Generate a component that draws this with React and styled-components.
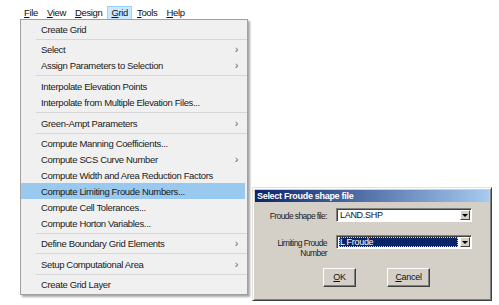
import React from "react";
import styled, { createGlobalStyle } from "styled-components";

const GlobalStyle = createGlobalStyle`
  html, body {
    margin: 0;
    padding: 0;
    background: #ffffff;
  }
  body {
    font-family: "Liberation Sans", Arial, sans-serif;
  }
`;

const menuBar = [
  { key: "F", rest: "ile" },
  { key: "V", rest: "iew" },
  { key: "D", rest: "esign" },
  { key: "G", rest: "rid", open: true },
  { key: "T", rest: "ools" },
  { key: "H", rest: "elp" },
];

const items = [
  { label: "Create Grid" },
  { sep: 4 },
  { label: "Select", sub: true },
  { label: "Assign Parameters to Selection", sub: true },
  { sep: 5 },
  { label: "Interpolate Elevation Points" },
  { label: "Interpolate from Multiple Elevation Files..." },
  { sep: 5 },
  { label: "Green-Ampt Parameters", sub: true },
  { sep: 4 },
  { label: "Compute Manning Coefficients..." },
  { label: "Compute SCS Curve Number", sub: true },
  { label: "Compute Width and Area Reduction Factors" },
  { label: "Compute Limiting Froude Numbers...", active: true },
  { label: "Compute Cell Tolerances..." },
  { label: "Compute Horton Variables..." },
  { sep: 4 },
  { label: "Define Boundary Grid Elements", sub: true },
  { sep: 5 },
  { label: "Setup Computational Area", sub: true },
  { sep: 4 },
  { label: "Create Grid Layer" },
];

function App() {
  return (
    <Page>
      <GlobalStyle />
      <MenuBar>
        {menuBar.map((m) => (
          <BarItem key={m.key} open={m.open}>
            <u>{m.key}</u>
            {m.rest}
          </BarItem>
        ))}
      </MenuBar>
      <Stage>
        <Dropdown>
          {items.map((it, i) =>
            it.sep ? (
              <Separator key={i} h={it.sep} />
            ) : (
              <MenuItem key={i} active={it.active}>
                <span>{it.label}</span>
                {it.sub && <Chevron>&#x203A;</Chevron>}
              </MenuItem>
            )
          )}
        </Dropdown>
        <Dialog>
          <TitleBar>Select Froude shape file</TitleBar>
          <DialogBody>
            <FieldRow>
              <FieldLabel>Froude shape file:</FieldLabel>
              <Combo>
                <ComboText>LAND.SHP</ComboText>
                <ComboButton />
              </Combo>
            </FieldRow>
            <FieldRow>
              <FieldLabel>
                Limiting Froude
                <br />
                Number
              </FieldLabel>
              <Combo>
                <ComboText selected>L Froude</ComboText>
                <ComboButton />
              </Combo>
            </FieldRow>
            <ButtonRow>
              <DlgButton w={33}>
                <u>O</u>K
              </DlgButton>
              <DlgButton w={43}>
                <u>C</u>ancel
              </DlgButton>
            </ButtonRow>
          </DialogBody>
        </Dialog>
      </Stage>
    </Page>
  );
}

export default App;

const Page = styled.div`
  width: 499px;
  height: 305px;
  overflow: hidden;
  background: #fff;
`;

const MenuBar = styled.div`
  display: flex;
  gap: 1px;
  padding: 6px 0 0 20px;
  height: 13px;
`;

const BarItem = styled.div`
  height: 12px;
  padding: 0 3px;
  font-size: 9.5px;
  letter-spacing: -0.35px;
  line-height: 12px;
  color: #111;
  white-space: nowrap;
  border: 1px solid ${(p) => (p.open ? "#99d1ff" : "transparent")};
  background: ${(p) => (p.open ? "#cce8ff" : "transparent")};
  u {
    text-decoration-thickness: 1px;
    text-underline-offset: 1px;
  }
`;

const Stage = styled.div`
  display: flex;
  align-items: flex-start;
  padding-left: 20px;
`;

const Dropdown = styled.div`
  width: 226px;
  background: #f0f0f0;
  border: 1px solid #a0a0a0;
  padding: 1px 0 2px;
  box-shadow: 2px 2px 2px rgba(0, 0, 0, 0.35);
`;

const MenuItem = styled.div`
  display: flex;
  align-items: center;
  justify-content: space-between;
  height: 16px;
  padding: 0 7px 0 20px;
  margin-right: 2px;
  font-size: 9.5px;
  letter-spacing: -0.35px;
  white-space: nowrap;
  color: #1a1a1a;
  background: ${(p) => (p.active ? "#99c9ef" : "transparent")};
`;

const Chevron = styled.span`
  font-size: 11px;
  color: #666;
  line-height: 1;
`;

const Separator = styled.div`
  height: ${(p) => p.h}px;
  display: flex;
  align-items: center;
  padding-left: 15px;
  &::after {
    content: "";
    flex: 1;
    height: 1px;
    background: #d7d7d7;
  }
`;

const Dialog = styled.div`
  margin: 168px 0 0 4px;
  width: 234px;
  height: 108px;
  background: #d4d0c8;
  border: 1px solid;
  border-color: #e4e2dc #404040 #404040 #e4e2dc;
  box-shadow: inset 1px 1px 0 #ffffff, inset -1px -1px 0 #808080;
  padding: 2px;
  display: flex;
  flex-direction: column;
`;

const TitleBar = styled.div`
  height: 12px;
  line-height: 12px;
  padding-left: 2px;
  font-size: 9px;
  font-weight: bold;
  color: #fff;
  letter-spacing: -0.3px;
  white-space: nowrap;
  background: linear-gradient(to right, #0a246a, #a6caf0);
`;

const DialogBody = styled.div`
  flex: 1;
  display: flex;
  flex-direction: column;
  padding-top: 6px;
`;

const FieldRow = styled.div`
  display: flex;
  align-items: flex-start;
  height: 22px;
  margin-bottom: 5px;
`;

const FieldLabel = styled.div`
  width: 72px;
  text-align: right;
  font-size: 8.5px;
  line-height: 10px;
  letter-spacing: -0.6px;
  white-space: nowrap;
  color: #222;
  padding-top: 3px;
`;

const Combo = styled.div`
  margin-left: 9px;
  width: 136px;
  height: 14px;
  display: flex;
  background: #fff;
  border: 1px solid;
  border-color: #808080 #ffffff #ffffff #808080;
  box-shadow: inset 1px 1px 0 #404040;
  box-sizing: border-box;
  padding: 1px 1px 1px 2px;
`;

const ComboText = styled.div`
  flex: 1;
  font-size: 9px;
  line-height: 10px;
  padding-left: 1px;
  margin-right: 2px;
  letter-spacing: -0.3px;
  color: ${(p) => (p.selected ? "#fff" : "#111")};
  background: ${(p) => (p.selected ? "#0a246a" : "transparent")};
  outline: ${(p) => (p.selected ? "1px dotted #d4d0c8" : "none")};
  outline-offset: -1px;
`;

const ComboButton = styled.div`
  width: 10px;
  height: 10px;
  background: #d4d0c8;
  border: 1px solid;
  border-color: #ffffff #404040 #404040 #ffffff;
  box-sizing: border-box;
  display: flex;
  align-items: center;
  justify-content: center;
  &::after {
    content: "";
    border-left: 3px solid transparent;
    border-right: 3px solid transparent;
    border-top: 3px solid #000;
  }
`;

const ButtonRow = styled.div`
  display: flex;
  gap: 31px;
  padding-left: 68px;
  margin-top: 6px;
`;

const DlgButton = styled.div`
  width: ${(p) => p.w}px;
  height: 19px;
  box-sizing: border-box;
  background: #d4d0c8;
  border: 1px solid;
  border-color: #ffffff #404040 #404040 #ffffff;
  box-shadow: inset -1px -1px 0 #808080;
  font-size: 9px;
  line-height: 17px;
  letter-spacing: -0.3px;
  text-align: center;
  color: #111;
`;
